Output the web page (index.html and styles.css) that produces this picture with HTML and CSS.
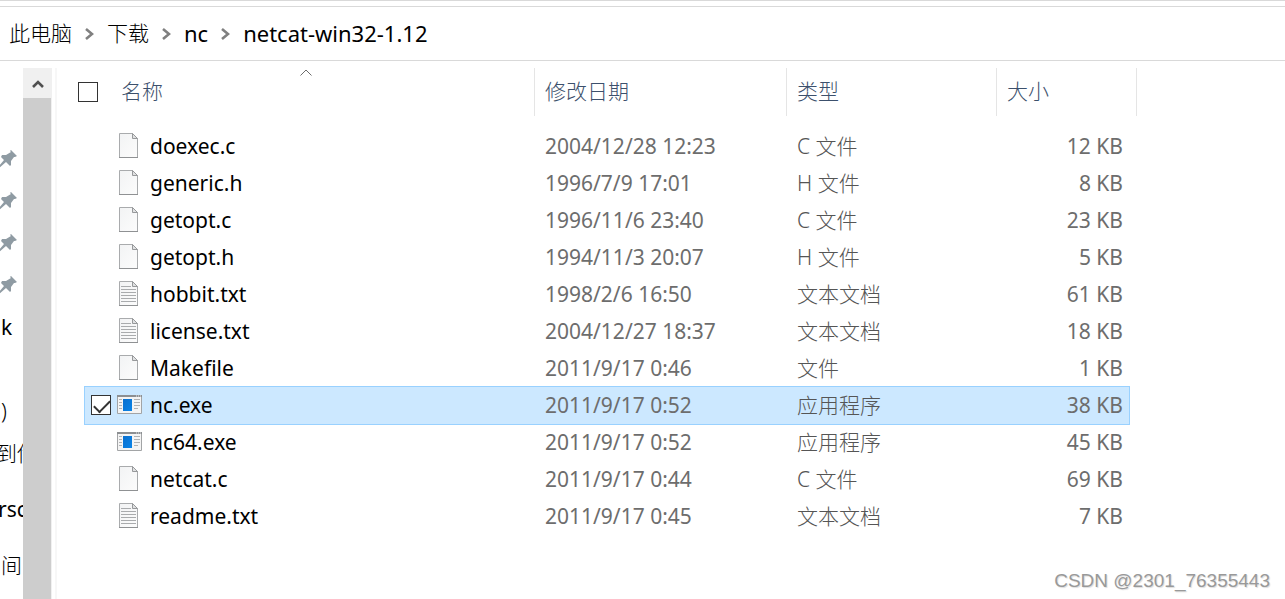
FILE: index.html
```html
<!DOCTYPE html>
<html lang="zh-CN">
<head>
	<meta charset="utf-8">
	<title>netcat-win32-1.12</title>
	<link rel="stylesheet" href="styles.css">
</head>
<body>
<!-- 图标 -->
<svg class="defs" aria-hidden="true">
	<defs>
		<linearGradient id="paper" x1="0" y1="0" x2="1" y2="1">
			<stop offset="0" stop-color="#f2f3f4"/>
			<stop offset="1" stop-color="#fcfcfc"/>
		</linearGradient>
		<linearGradient id="blue" x1="0" y1="0" x2="1" y2="1">
			<stop offset="0" stop-color="#0a6fce"/>
			<stop offset="1" stop-color="#0a84e8"/>
		</linearGradient>
		<symbol id="file" viewBox="0 0 25 25">
			<path d="M2.5.5h13l5 5v19h-18z" fill="url(#paper)" stroke="#a9abad"/>
			<path d="M2 24.5h19" stroke="#8f9193"/>
			<path d="M15.5.5v5h5z" fill="#e0e1e2" stroke="#97999b"/>
		</symbol>
		<symbol id="text" viewBox="0 0 25 25">
			<use href="#file"/>
			<path d="M4 5.5h10M4 8.5h15M4 11.5h15M4 14.5h15M4 17.5h15M4 20.5h15" stroke="#a9abad"/>
		</symbol>
		<symbol id="exe" viewBox="0 0 25 25">
			<path d="M.5 3.5h24v18H.5z" fill="#f4f4f4" stroke="#a2a4a6"/>
			<path d="M0 4h25" stroke="#8c8f92" stroke-width="2"/>
			<path d="M19 4h1M21 4h1M23 4h1" stroke="#e8e8e8"/>
			<path d="M2 7.500h3M2 10.500h3M2 13.500h3M2 16.500h3M17 7.500h6M17 10.500h6M17 13.500h6M17 16.500h4" stroke="#b0b2b4"/>
			<path d="M6 7h9v12H6z" fill="url(#blue)"/>
		</symbol>
		<symbol id="pin" viewBox="0 0 18 18">
			<path d="M11 0l6 6-2 1-1 0-3 4 0 4-1 1-4-4-7 6-1-1 6-7-3-3 1-2 4 0 5-3-1-1z" fill="#8f9ba3"/>
		</symbol>
		<symbol id="arrow" viewBox="0 0 9 12">
			<path d="M1 1l6 5-6 5" fill="none" stroke="#808080" stroke-width="2.600"/>
		</symbol>
	</defs>
</svg>

<nav class="address">
	<a href="#">此电脑</a>
	<svg class="arrow"><use href="#arrow"/></svg>
	<a href="#">下载</a>
	<svg class="arrow"><use href="#arrow"/></svg>
	<a href="#" class="en">nc</a>
	<svg class="arrow"><use href="#arrow"/></svg>
	<a href="#" class="en">netcat-win32-1.12</a>
</nav>

<div class="main">
	<ul class="tree">
		<li><svg><use href="#pin"/></svg></li>
		<li><svg><use href="#pin"/></svg></li>
		<li><svg><use href="#pin"/></svg></li>
		<li><svg><use href="#pin"/></svg></li>
		<li>k</li>
		<li></li>
		<li class="cut">:)</li>
		<li class="cut">到传</li>
		<li class="root en">rsc</li>
		<li class="root">间</li>
	</ul>
	<div class="scroll">
		<button type="button" aria-label="向上滚动"><svg viewBox="0 0 12 10"><path d="M1 8l5-5 5 5" fill="none" stroke="#505050" stroke-width="2.600"/></svg></button>
		<div class="thumb"></div>
	</div>
	<div class="files">
		<table>
			<colgroup><col class="c-name"><col class="c-date"><col class="c-type"><col class="c-size"></colgroup>
			<thead>
				<tr>
					<th>
						<svg class="sort" viewBox="0 0 12 7"><path d="M.5 6.500L6 1l5.500 5.500" fill="none" stroke="#6d6d6d"/></svg>
						<div class="all"><input type="checkbox" aria-label="全选"><span>名称</span></div>
					</th>
					<th>修改日期</th>
					<th>类型</th>
					<th>大小</th>
				</tr>
			</thead>
			<tbody>
				<tr><td><label><input type="checkbox"><svg><use href="#file"/></svg>doexec.c</label></td><td>2004/12/28 12:23</td><td>C 文件</td><td>12 KB</td></tr>
				<tr><td><label><input type="checkbox"><svg><use href="#file"/></svg>generic.h</label></td><td>1996/7/9 17:01</td><td>H 文件</td><td>8 KB</td></tr>
				<tr><td><label><input type="checkbox"><svg><use href="#file"/></svg>getopt.c</label></td><td>1996/11/6 23:40</td><td>C 文件</td><td>23 KB</td></tr>
				<tr><td><label><input type="checkbox"><svg><use href="#file"/></svg>getopt.h</label></td><td>1994/11/3 20:07</td><td>H 文件</td><td>5 KB</td></tr>
				<tr><td><label><input type="checkbox"><svg><use href="#text"/></svg>hobbit.txt</label></td><td>1998/2/6 16:50</td><td>文本文档</td><td>61 KB</td></tr>
				<tr><td><label><input type="checkbox"><svg><use href="#text"/></svg>license.txt</label></td><td>2004/12/27 18:37</td><td>文本文档</td><td>18 KB</td></tr>
				<tr><td><label><input type="checkbox"><svg><use href="#file"/></svg>Makefile</label></td><td>2011/9/17 0:46</td><td>文件</td><td>1 KB</td></tr>
				<tr class="selected"><td><label><input type="checkbox" checked><svg><use href="#exe"/></svg>nc.exe</label></td><td>2011/9/17 0:52</td><td>应用程序</td><td>38 KB</td></tr>
				<tr><td><label><input type="checkbox"><svg><use href="#exe"/></svg>nc64.exe</label></td><td>2011/9/17 0:52</td><td>应用程序</td><td>45 KB</td></tr>
				<tr><td><label><input type="checkbox"><svg><use href="#file"/></svg>netcat.c</label></td><td>2011/9/17 0:44</td><td>C 文件</td><td>69 KB</td></tr>
				<tr><td><label><input type="checkbox"><svg><use href="#text"/></svg>readme.txt</label></td><td>2011/9/17 0:45</td><td>文本文档</td><td>7 KB</td></tr>
			</tbody>
		</table>
	</div>
</div>
<div class="mark">CSDN @2301_76355443</div>
</body>
</html>
```
FILE: styles.css
```css
*{box-sizing:border-box;}
body,ul,li,table,th,td{margin:0;padding:0;}
ul{list-style:none;}
body{display:flex;flex-direction:column;height:100vh;overflow:hidden;background:#fff;color:#000;border-top:1px solid #d9d9d9;font:21px/28px "Noto Sans","Noto Sans CJK SC",sans-serif;}
svg{display:block;flex:none;}
.defs{position:absolute;width:0;height:0;}

/* 地址栏 */
.address{display:flex;align-items:center;height:55px;margin-top:5px;padding:0 0 2px 9px;border-top:1px solid #d9d9d9;border-bottom:1px solid #d9d9d9;flex:none;}
.address a{color:#000;font-weight:300;text-decoration:none;}
.address a.en{font-size:22px;font-weight:400;}
.arrow{width:9px;height:12px;margin:2px 13px 0;}

.main{display:flex;flex:1;min-height:0;padding-top:7px;}

/* 左侧导航 */
.tree{width:23px;padding-top:70px;overflow:hidden;white-space:nowrap;flex:none;}
.tree li{height:42px;line-height:42px;text-indent:1px;}
.tree li.cut{font-weight:300;text-indent:-4px;}
.tree li.root{height:56px;line-height:70px;font-weight:300;}
.tree li.en{font-weight:400;text-indent:-2px;}
.tree svg{width:18px;height:18px;position:relative;top:12px;}
.scroll{display:flex;flex-direction:column;width:29px;background:#f0f0f0;flex:none;}
.scroll button{display:flex;align-items:center;justify-content:center;height:30px;padding:2px 0 0;border:0;background:#f0f0f0;}
.scroll button svg{width:12px;height:10px;}
.thumb{flex:1;margin-right:1px;background:#cdcdcd;}

/* 文件列表 */
.files{flex:1;margin-left:3px;padding-left:21px;border-left:2px solid #f7f7f7;}
table{width:1059px;table-layout:fixed;border-collapse:separate;border-spacing:0;color:#6d6d6d;position:relative;z-index:0;}
.c-name{width:457px;}
.c-date{width:252px;}
.c-type{width:210px;}
.c-size{width:140px;}
th{position:relative;height:48px;padding:0 0 2px 10px;border-right:1px solid #e5e5e5;color:#3c506c;font-weight:300;text-align:left;}
th:first-child{padding-left:0;}
.all{display:flex;align-items:center;gap:23px;}
.all input{margin-top:2px;}
.sort{position:absolute;top:1px;left:50%;width:12px;height:7px;margin-left:-6px;}
tbody::before{content:"";display:block;height:12px;}
td{height:37px;padding:0 0 2px 10px;white-space:nowrap;}
td:first-child{padding-left:13px;}
td:nth-child(3){color:#555;font-weight:300;}
td:last-child{padding-right:14px;text-align:right;}
label{display:flex;align-items:center;color:#000;}
label svg{width:25px;height:25px;margin:0 8px 0 6px;}
input{appearance:none;width:20px;height:20px;margin:0;border:1px solid #333;background:#fff;flex:none;}
td input{opacity:0;}
td input:checked{display:flex;opacity:1;}
td input:checked::before{content:"";width:14px;height:7px;margin:4px 0 0 2px;border:solid #333;border-width:0 0 2px 2px;transform:rotate(-45deg);}
.selected{position:relative;}
.selected::after{content:"";position:absolute;z-index:-1;top:-1px;right:7px;bottom:-1px;left:6px;background:#cce8ff;border:1px solid #99d1ff;}

.mark{position:absolute;right:15px;bottom:6px;color:#999;font:19px/24px "Liberation Sans",sans-serif;text-shadow:1px 1px 1px #ddd;}
```
